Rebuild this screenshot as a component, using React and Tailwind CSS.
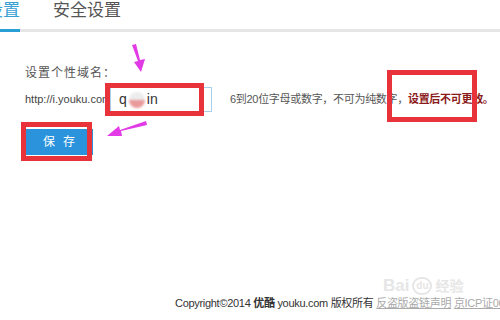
import React from 'react';

const RedBox = ({ className }) => (
  <div className={`absolute border-[5px] border-[#e8333a] ${className}`} />
);

const App = () => {
  return (
    <div className="relative w-[500px] h-[320px] bg-white overflow-hidden font-['Liberation_Sans','Noto_Sans_CJK_SC',sans-serif] text-[#555]">
      {/* Tabs */}
      <div className="flex items-start h-[32px] border-b-[3px] border-[#e6e6e6]">
        <div className="ml-[-14px] h-[32px] -mb-[3px] border-b-[3px] border-[#2a9fd6] text-[17px] leading-[22px] text-[#3a9fd4] whitespace-nowrap">设置</div>
        <div className="ml-[33px] text-[17px] leading-[22px] text-[#555] whitespace-nowrap">安全设置</div>
      </div>

      {/* Form */}
      <div className="pl-[25px]">
        <div className="mt-[32px] text-[12px] leading-[18px] tracking-[1px] text-[#555]">设置个性域名：</div>
        <div className="mt-[5px] flex items-center h-[25px]">
          <span className="w-[85px] text-[11px] text-[#444] whitespace-nowrap">http://i.youku.com</span>
          <div className="relative w-[102px] h-[25px] border border-[#a8d0ea] flex items-center pl-[8px] text-[14px] text-[#333]">
            <span>q</span>
            <span className="mx-[2px] w-[16px] h-[16px] rounded-full bg-[linear-gradient(#ececec_50%,#e99a9a_50%)] blur-[1px]" />
            <span>in</span>
          </div>
          <span className="ml-[18px] text-[11px] tracking-[-0.3px] text-[#555] whitespace-nowrap">
            6到20位字母或数字，不可为纯数字，<b className="text-[#8b1a1a]">设置后不可更改。</b>
          </span>
        </div>
        <button className="mt-[17px] w-[68px] h-[26px] bg-[#2a93dc] text-white text-[12px] tracking-[8px] pl-[8px]">保存</button>
      </div>

      {/* Footer */}
      <div className="absolute left-[175px] top-[295px] text-[11px] leading-[16px] tracking-[-0.3px] text-[#333] whitespace-nowrap">
        Copyright©2014 <b className="font-semibold">优酷</b> youku.com 版权所有{' '}
        <span className="underline text-[#aaa]">反盗版盗链声明</span>{' '}
        <span className="underline text-[#aaa]">京ICP证060288号</span>
      </div>

      {/* Baidu watermark */}
      <div className="absolute left-[383px] top-[276px] flex items-center gap-[3px] text-[#e6e6e6] text-[17px] font-bold leading-[20px] whitespace-nowrap">
        <span>Bai</span>
        <span className="w-[20px] h-[18px] rounded-full border-2 border-[#e6e6e6] text-[10px] leading-[14px] text-center">du</span>
        <span className="text-[14px]">经验</span>
      </div>

      {/* Annotations */}
      <RedBox className="left-[105px] top-[83px] w-[99px] h-[33px]" />
      <RedBox className="left-[387px] top-[70px] w-[90px] h-[52px]" />
      <RedBox className="left-[21px] top-[122px] w-[71px] h-[39px]" />

      <svg className="absolute left-0 top-0" width="500" height="320">
        <path d="M132 45 L136 44 L140 60 L145 59 L141 72 L134 62 L138 61 Z" fill="#e23ae6" />
        <path d="M146 121 L147 125 L121 131 L122 136 L107 136 L119 126 L120 130 Z" fill="#e23ae6" />
      </svg>
    </div>
  );
};

export default App;
